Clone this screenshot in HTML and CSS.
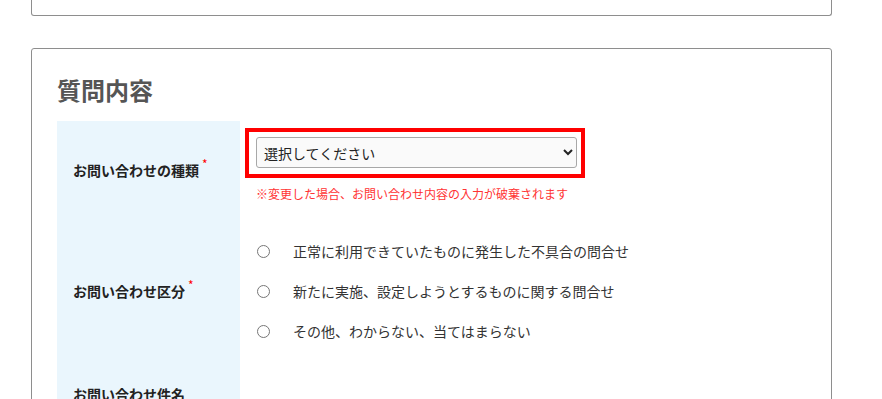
FILE: index.html
```html
<!DOCTYPE html>
<html lang="ja">
<head>
  <meta charset="UTF-8">
  <meta name="viewport" content="width=device-width, initial-scale=1.0">
  <title>お問い合わせフォーム</title>
  <link rel="stylesheet" href="styles.css">
</head>
<body>
  <div class="page">
    <!-- previous section, only its bottom edge is visible -->
    <div class="card card-prev"></div>

    <div class="card">
      <h2 class="card-title">質問内容</h2>

      <div class="form-table">
        <div class="form-label"><span>お問い合わせの種類<span class="req">*</span></span></div>
        <div class="form-value first">
          <div class="highlight">
            <select class="select">
              <option>選択してください</option>
            </select>
          </div>
          <div class="note">※変更した場合、お問い合わせ内容の入力が破棄されます</div>
        </div>

        <div class="form-label"><span>お問い合わせ区分<span class="req">*</span></span></div>
        <div class="form-value radios">
          <label class="radio"><input type="radio" name="kubun">正常に利用できていたものに発生した不具合の問合せ</label>
          <label class="radio"><input type="radio" name="kubun">新たに実施、設定しようとするものに関する問合せ</label>
          <label class="radio"><input type="radio" name="kubun">その他、わからない、当てはまらない</label>
        </div>

        <div class="form-label tall"><span>お問い合わせ件名</span></div>
        <div class="form-value"></div>
      </div>
    </div>
  </div>
</body>
</html>
```

FILE: styles.css
```css
body {
  margin: 0;
  background: #fff;
  color: #333;
  font-family: "Noto Sans CJK JP", "Noto Sans", sans-serif;
}
.page {
  padding-left: 31px;
}
.card {
  box-sizing: border-box;
  width: 801px;
  border: 1px solid #8e8e8e;
  border-radius: 3px;
  padding: 23px 25px 0;
  margin-top: 32px;
  min-height: 400px;
}
.card-prev {
  height: 16px;
  min-height: 0;
  margin-top: 0;
  border-top: 0;
  border-radius: 0 0 3px 3px;
  padding: 0;
}
.card-title {
  margin: 0 0 13px;
  font-size: 24px;
  line-height: 36px;
  font-weight: 700;
  color: #555;
}
.form-table {
  display: grid;
  grid-template-columns: 183px 1fr;
}
.form-label {
  display: flex;
  align-items: center;
  padding-left: 16px;
  background: #eaf6fd;
  font-size: 14px;
  font-weight: 700;
  color: #222;
}
.form-label.tall {
  min-height: 64px;
}
.req {
  position: relative;
  top: -7px;
  margin-left: 3px;
  color: #f00;
  font-size: 12px;
  font-weight: 400;
}
.form-value {
  padding-left: 16px;
}
.form-value.first {
  padding-top: 7px;
  padding-bottom: 16px;
}
.highlight {
  box-sizing: border-box;
  width: 340px;
  height: 50px;
  margin-left: -11px;
  border: 4px solid #f00;
  padding: 5px 4px 0 7px;
}
.select {
  box-sizing: border-box;
  width: 321px;
  height: 31px;
  border: 1px solid #a8a8a8;
  border-radius: 3px;
  background: #fafafa;
  padding-left: 3px;
  font-family: inherit;
  font-size: 14px;
  color: #222;
}
.note {
  margin-top: 7px;
  font-size: 12px;
  line-height: 18px;
  color: #f33;
}
.radios {
  padding-top: 12px;
  padding-bottom: 11px;
}
.radio {
  display: flex;
  align-items: center;
  height: 40px;
  font-size: 14px;
  color: #333;
}
.radio input {
  width: 13px;
  height: 13px;
  margin: 0 23px 0 1px;
}
```
